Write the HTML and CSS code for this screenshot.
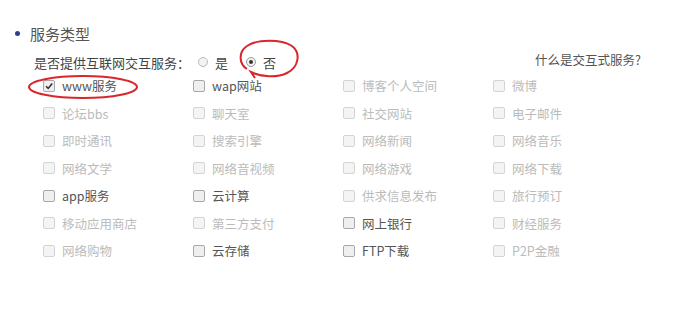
FILE: index.html
```html
<!DOCTYPE html>
<html lang="zh">
<head>
<meta charset="utf-8">
<link rel="stylesheet" href="styles.css">
</head>
<body>
<div class="panel">
  <div class="title"><span class="dot"></span>服务类型</div>
  <div class="ask">
    <span class="ask-label">是否提供互联网交互服务：</span>
    <span class="radio"></span><span class="opt">是</span>
    <span class="radio on"></span><span class="opt">否</span>
    <span class="help">什么是交互式服务?</span>
  </div>
  <div class="grid">
    <label class="item on"><span class="cb checked"><svg viewBox="0 0 10 10"><path d="M2 5.2 L4.2 7.4 L8.2 2.4" fill="none" stroke="#333" stroke-width="1.6"/></svg></span>www服务</label>
    <label class="item on"><span class="cb"></span>wap网站</label>
    <label class="item"><span class="cb"></span>博客个人空间</label>
    <label class="item"><span class="cb"></span>微博</label>
    <label class="item"><span class="cb"></span>论坛bbs</label>
    <label class="item"><span class="cb"></span>聊天室</label>
    <label class="item"><span class="cb"></span>社交网站</label>
    <label class="item"><span class="cb"></span>电子邮件</label>
    <label class="item"><span class="cb"></span>即时通讯</label>
    <label class="item"><span class="cb"></span>搜索引擎</label>
    <label class="item"><span class="cb"></span>网络新闻</label>
    <label class="item"><span class="cb"></span>网络音乐</label>
    <label class="item"><span class="cb"></span>网络文学</label>
    <label class="item"><span class="cb"></span>网络音视频</label>
    <label class="item"><span class="cb"></span>网络游戏</label>
    <label class="item"><span class="cb"></span>网络下载</label>
    <label class="item on"><span class="cb"></span>app服务</label>
    <label class="item on"><span class="cb"></span>云计算</label>
    <label class="item"><span class="cb"></span>供求信息发布</label>
    <label class="item"><span class="cb"></span>旅行预订</label>
    <label class="item"><span class="cb"></span>移动应用商店</label>
    <label class="item"><span class="cb"></span>第三方支付</label>
    <label class="item on"><span class="cb"></span>网上银行</label>
    <label class="item"><span class="cb"></span>财经服务</label>
    <label class="item"><span class="cb"></span>网络购物</label>
    <label class="item on"><span class="cb"></span>云存储</label>
    <label class="item on"><span class="cb"></span>FTP下载</label>
    <label class="item"><span class="cb"></span>P2P金融</label>
  </div>
  <svg class="mark mark-no" viewBox="0 0 66 42"><path d="M12 31 C4 26 3 14 12 8 C22 1 46 1 57 8 C66 15 64 29 52 35 C42 40 26 39 16 34 L20 40" fill="none" stroke="#d9262c" stroke-width="2"/></svg>
  <svg class="mark mark-www" viewBox="0 0 112 26"><ellipse cx="56" cy="13" rx="54" ry="11" fill="none" stroke="#d9262c" stroke-width="2"/></svg>
</div>
</body>
</html>
```
FILE: styles.css
```css
html, body {
  margin: 0;
  padding: 0;
  background: #fff;
}
body {
  font-family: "Noto Sans CJK SC", "Liberation Sans", sans-serif;
  color: #555;
  width: 699px;
  height: 309px;
  overflow: hidden;
}
.panel {
  position: relative;
  padding: 22px 0 0 15px;
}
.title {
  display: flex;
  align-items: center;
  font-size: 15px;
  color: #555;
  height: 22px;
}
.dot {
  width: 5px;
  height: 5px;
  border-radius: 50%;
  background: #2e3f8f;
  margin-right: 10px;
}
.ask {
  display: flex;
  align-items: center;
  margin: 8px 0 0 19px;
  height: 20px;
  font-size: 13px;
  color: #444;
  width: 607px;
}
.ask-label {
  margin-right: 8px;
}
.radio {
  width: 10px;
  height: 10px;
  border-radius: 50%;
  border: 1px solid #bbb;
  background: #f2f2f2;
  box-sizing: border-box;
  margin-right: 7px;
  position: relative;
}
.radio.on {
  border-color: #999;
}
.radio.on::after {
  content: "";
  position: absolute;
  left: 2px;
  top: 2px;
  width: 4px;
  height: 4px;
  border-radius: 50%;
  background: #333;
}
.opt {
  margin-right: 18px;
  font-size: 13px;
}
.help {
  margin-left: auto;
  margin-top: -6px;
  color: #555;
  font-size: 12.5px;
}
.grid {
  display: grid;
  grid-template-columns: 150px 150px 150px 150px;
  grid-auto-rows: 27.5px;
  margin: 0 0 0 28px;
}
.item {
  display: flex;
  align-items: center;
  font-size: 12.5px;
  color: #bbb;
}
.item.on {
  color: #555;
}
.cb {
  width: 10px;
  height: 10px;
  border: 1px solid #d4d4d4;
  border-radius: 2px;
  background: #f4f4f4;
  margin-right: 7px;
  flex: none;
  display: flex;
}
.item.on .cb {
  border-color: #a8a8a8;
  background: #efefef;
}
.cb svg {
  width: 10px;
  height: 10px;
}
.mark {
  position: absolute;
}
.mark-no {
  left: 235px;
  top: 38px;
  width: 66px;
  height: 42px;
}
.mark-www {
  left: 27px;
  top: 74px;
  width: 112px;
  height: 26px;
}
```
